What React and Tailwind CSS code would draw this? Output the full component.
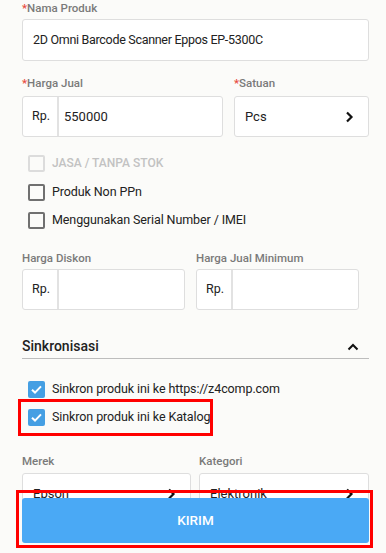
import React from "react";

const font = { fontFamily: "Roboto, 'Noto Sans', sans-serif" };

function Label({ children, req, className = "" }) {
  return (
    <div className={"h-[14px] text-[11.5px] leading-[14px] font-medium text-[#7a7a7a] " + className}>
      {req && <span className="text-[#e84a3f]">*</span>}
      {children}
    </div>
  );
}

function Chevron() {
  return (
    <svg width="9" height="12" viewBox="0 0 9 12" className="shrink-0">
      <path d="M2 1.5 L6.5 6 L2 10.5" fill="none" stroke="#111" strokeWidth="2.2" />
    </svg>
  );
}

function RpBox({ value, className = "" }) {
  return (
    <div className={"flex h-[41px] rounded-[3px] border border-[#dedede] bg-white " + className}>
      <div className="flex w-[36px] items-center border-r-2 border-[#e2e2e2] pl-[9px] text-[12.5px] text-[#222]">Rp.</div>
      <div className="flex items-center pl-[5px] text-[13px] text-[#222]">{value}</div>
    </div>
  );
}

function Check({ checked, disabled }) {
  if (checked) {
    return (
      <div className="flex h-[17px] w-[17px] items-center justify-center rounded-[2px] bg-[#459fe3]">
        <svg width="13" height="13" viewBox="0 0 13 13">
          <path d="M2 6.8 L5 9.6 L11 3.4" fill="none" stroke="white" strokeWidth="2" />
        </svg>
      </div>
    );
  }
  return (
    <div
      className={
        "h-[17px] w-[17px] rounded-[2px] border-2 " +
        (disabled ? "border-[#dcdcdc]" : "border-[#707070]")
      }
    />
  );
}

function CheckRow({ checked, disabled, children, className = "" }) {
  return (
    <div className={"flex h-[28px] items-center gap-[7px] pl-[6px] " + className}>
      <Check checked={checked} disabled={disabled} />
      <span
        className={
          disabled
            ? "text-[12px] font-medium uppercase text-[#c2c2c2]"
            : "text-[12.5px] tracking-[-0.1px] text-[#222]"
        }
      >
        {children}
      </span>
    </div>
  );
}

export default function App() {
  return (
    <div style={font} className="relative h-[553px] w-[386px] overflow-hidden bg-[#fbfbf9]">
      <div className="pl-[22px] pr-[17px] pt-[1px]">
        <Label req>Nama Produk</Label>
        <div className="mt-[4px] flex h-[42px] items-center rounded-[3px] border border-[#dedede] bg-white pl-[10px] text-[12.5px] tracking-[-0.3px] text-[#222]">
          2D Omni Barcode Scanner Eppos EP-5300C
        </div>

        <div className="mt-[15px] flex gap-[11px]">
          <div className="w-[201px]">
            <Label req>Harga Jual</Label>
            <RpBox value="550000" className="mt-[6px]" />
          </div>
          <div className="flex-1">
            <Label req>Satuan</Label>
            <div className="mt-[6px] flex h-[41px] items-center justify-between rounded-[3px] border border-[#dedede] bg-white pl-[10px] pr-[14px] text-[13px] text-[#222]">
              Pcs
              <Chevron />
            </div>
          </div>
        </div>

        <div className="mt-[12px]">
          <CheckRow disabled>JASA / TANPA STOK</CheckRow>
          <CheckRow className="mt-[1px]">Produk Non PPn</CheckRow>
          <CheckRow className="mt-[0px]">Menggunakan Serial Number / IMEI</CheckRow>
        </div>

        <div className="mt-[17px] flex gap-[11px] pr-[10px]">
          <div className="flex-1">
            <Label>Harga Diskon</Label>
            <RpBox value="" className="mt-[4px]" />
          </div>
          <div className="flex-1">
            <Label>Harga Jual Minimum</Label>
            <RpBox value="" className="mt-[4px]" />
          </div>
        </div>

        <div className="mt-[27px] flex h-[22px] items-center justify-between border-b border-[#bdbdbd] pb-[2px]">
          <span className="text-[14px] font-medium text-[#222]">Sinkronisasi</span>
          <svg width="12" height="8" viewBox="0 0 12 8" className="mr-[10px]">
            <path d="M1.5 6.5 L6 2 L10.5 6.5" fill="none" stroke="#111" strokeWidth="2" />
          </svg>
        </div>

        <div className="mt-[16px]">
          <CheckRow checked>Sinkron produk ini ke https://z4comp.com</CheckRow>
          <div className="relative">
            <CheckRow checked>Sinkron produk ini ke Katalog</CheckRow>
            <div className="pointer-events-none absolute left-[-4px] top-[-4px] h-[37px] w-[195px] border-[3px] border-[#ff0000]" />
          </div>
        </div>

        <div className="mt-[23px] flex gap-[8px]">
          <div className="w-[169px]">
            <Label>Merek</Label>
            <div className="mt-[5px] flex h-[42px] items-center justify-between rounded-[3px] border border-[#dedede] bg-white pl-[10px] pr-[14px] text-[13px] text-[#222]">
              Epson
              <Chevron />
            </div>
          </div>
          <div className="flex-1">
            <Label>Kategori</Label>
            <div className="mt-[5px] flex h-[42px] items-center justify-between rounded-[3px] border border-[#dedede] bg-white pl-[10px] pr-[14px] text-[13px] text-[#222]">
              Elektronik
              <Chevron />
            </div>
          </div>
        </div>
      </div>

      <div className="absolute left-[22px] top-[498px] flex h-[45px] w-[347px] items-center justify-center rounded-[3px] bg-[#4aa9f5] text-[13.5px] font-medium text-white">
        KIRIM
      </div>
      <div className="pointer-events-none absolute left-[16px] top-[490px] h-[58px] w-[357px] border-[3px] border-[#ff0000]" />
    </div>
  );
}
